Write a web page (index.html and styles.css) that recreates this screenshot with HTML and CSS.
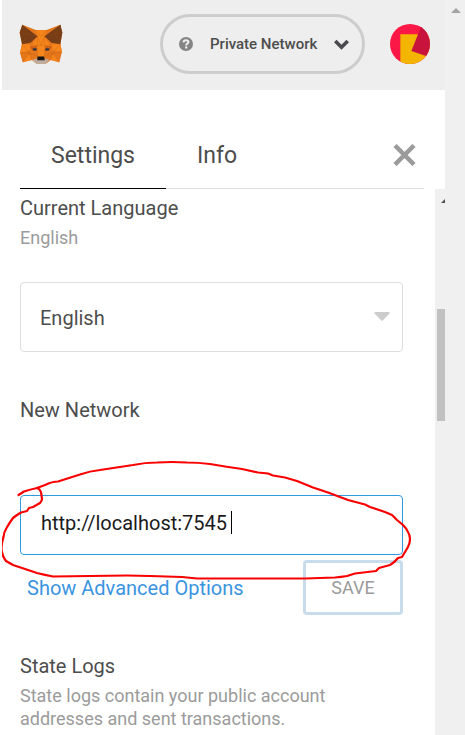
FILE: index.html
```html
<!DOCTYPE html>
<html lang="en">
<head>
<meta charset="utf-8">
<title>Settings</title>
<link rel="stylesheet" href="styles.css">
</head>
<body>
<div class="app">
  <header class="header">
    <svg class="fox" viewBox="56 70 131 124" aria-hidden="true">
      <path fill="#e4761b" d="M65 72 106 88H138L180 72 186 96 180 130 185 155 177 186 151 179 136 190H108L94 179 66 186 58 158 64 130 57 96Z"/>
      <path fill="#f6851b" d="M106 88H138L132 108 149 134 134 150 131 168H112L109 150 94 134 111 108ZM64 130 90 133 87 150 58 158ZM180 130 153 133 156 150 185 155ZM66 186 85 160 94 179ZM177 186 158 160 151 179Z"/>
      <path fill="#763d16" d="M65 72 111 107 90 127 64 131 57 96ZM180 72 132 107 153 127 180 131 186 96Z"/>
      <path fill="#cd6116" d="M87 138 108 136 111 151 96 150ZM156 138 135 136 132 151 147 150Z"/>
      <path fill="#c0ad9e" d="M95 178 111 174H131L147 178 134 191H109Z"/>
      <path fill="#161616" d="M111 168H131L133 180H110Z"/>
      <path fill="#233447" d="M96 144 107 143 109 150H98ZM147 144 136 143 134 150H145Z"/>
      <path fill="none" stroke="#a9530f" stroke-width="1" opacity=".7" d="M106 88 122 108 138 88M111 107 122 135 132 107M94 134 122 135 149 134M64 130 87 158 112 168M180 130 156 158 131 168M58 158H87L66 186M185 155 156 158 177 186M87 158 94 179M156 158 150 179M111 107 109 150 112 168M132 107 134 150 131 168M65 72 80 100 64 131M80 100 111 107M180 72 164 100 180 131M164 100 132 107M57 96 80 100M186 96 164 100"/>
    </svg>
    <button class="network" type="button">
      <svg class="help" viewBox="0 0 14 14" aria-hidden="true">
        <circle cx="7" cy="7" r="7" fill="#848484"/>
        <path d="M4.500 5.400C4.600 3.800 5.700 3.200 7 3.200c1.400 0 2.400.7 2.400 1.900C9.400 6.600 7.200 6.500 7.200 8.500" fill="none" stroke="#eee" stroke-width="2.100"/>
        <path d="M6.100 9.400H8.300V11.500H6.100Z" fill="#eee"/>
      </svg>
      <span>Private Network</span>
      <svg class="chevron" viewBox="0 0 14 10" aria-hidden="true"><path d="M1.200 1.800 7 7.500 12.800 1.800" fill="none" stroke="#4a4a4f" stroke-width="3.400"/></svg>
    </button>
    <button class="account" type="button" aria-label="Account">
      <svg viewBox="0 0 120 120" aria-hidden="true">
        <path fill="#fb1846" d="M0 0H120V120H0Z"/>
        <path fill="#f3b500" d="M31 31H125V125H31Z"/>
        <path fill="#fb1846" d="M82 0H120V31H82Z"/>
        <path fill="#c8143c" d="M93 8 130 22 115 98 64 81Z"/>
      </svg>
    </button>
  </header>
  <nav class="tabs">
    <a class="tab tab-active" href="#settings">Settings</a>
    <a class="tab" href="#info">Info</a>
    <button class="close" type="button" aria-label="Close">
      <svg viewBox="0 0 22 22" aria-hidden="true"><path d="M1.500 1.500 20.500 20.500M20.500 1.500 1.500 20.500" stroke="#9b9b9b" stroke-width="4.500"/></svg>
    </button>
  </nav>
  <div class="body">
    <main class="content" id="settings">
      <section class="language">
        <label class="title" for="language">Current Language</label>
        <p class="note">English</p>
        <div class="select-box">
          <select id="language"><option>English</option></select>
          <svg class="arrow" viewBox="0 0 16 9" aria-hidden="true"><path d="M1 0H15Q16 0 15.500 1.500L8.700 8.500Q8 9 7.300 8.500L.5 1.500Q0 0 1 0Z" fill="#cdcdcd"/></svg>
        </div>
      </section>
      <section class="rpc">
        <label class="title" for="rpc">New Network</label>
        <div class="field">
          <input id="rpc" type="text" value="http://localhost:7545">
          <span class="caret"></span>
          <svg class="scribble" viewBox="0 455 420 130" aria-hidden="true">
            <path d="M18.500 495 24 491.500Q30 489.500 37 488L45 485Q52 481.500 58 481.500L80 474.500Q90 471 100 470L133 465Q145 462.500 157 462.500 172 461.500 187 462.500 198 462.500 210 464L225 466.500 242 469 258 472.500 268 473.500 273 475.500 285 477.500 297 481 313 487.500 328 492.500 348 500 365 504.500 370 507 385 512 392 515 397 520 403 525Q407 529 408 532 410 535 410 539 410 543 408 547L402 557 398 558Q395 562 390 565L379 568 376 571 355 573.500 347 576Q341 577 335 577.500L305 578.500 225 578.500 197 578.500 182 577 150 576Q138 575.500 127 575.500L53 576.500Q45 575 37 573L22 568 13 565 6 561Q3 557 2.500 554 1 550 1.700 546 2 541 3.500 537 4 532 6.500 528 10 522 13 518L17 515 21 512.500 27 511 29 508 33 507 40 503Q42 501 42 499L41 492Q40 489 37 488" fill="none" stroke="#fb0000" stroke-width="2.200" stroke-linejoin="round" stroke-linecap="round"/>
          </svg>
        </div>
        <div class="actions">
          <a href="#advanced">Show Advanced Options</a>
          <button class="save" type="button">SAVE</button>
        </div>
      </section>
      <section class="logs">
        <h2 class="title">State Logs</h2>
        <p class="note">State logs contain your public account addresses and sent transactions.</p>
      </section>
    </main>
    <div class="inner-bar">
      <svg class="corner" viewBox="0 0 4 4" aria-hidden="true"><path d="M4 0V4H0Z" fill="#505050"/></svg>
      <div class="thumb"></div>
    </div>
  </div>
</div>
<div class="page-bar"><svg viewBox="0 0 10 5" aria-hidden="true"><path d="M5 0 10 5H0Z" fill="#a3a3a3"/></svg></div>
</body>
</html>
```
FILE: styles.css
```css
* { box-sizing: border-box; }
body {
  margin: 0;
  height: 100vh;
  overflow: hidden;
  display: flex;
  background: #fff;
  color: #4d4d4d;
  font: 20px/24px Roboto, sans-serif;
}
button, input, select { font: inherit; color: inherit; margin: 0; }
button { padding: 0; border: 0; background: none; }
a { color: inherit; text-decoration: none; }
svg { display: block; }
h2, p { margin: 0; }
.app { flex: 1; min-width: 0; margin-left: 2px; display: flex; flex-direction: column; }
.page-bar { width: 20px; background: #f0f0f0; padding: 8px 0 0 6px; }
.page-bar svg { width: 10px; height: 5px; }

.header {
  flex: none;
  height: 90px;
  padding: 0 15px 2px 17px;
  display: flex;
  align-items: center;
  background: #eee;
}
.fox { width: 44px; height: 41px; }
.network {
  height: 60px;
  width: 205px;
  margin-left: auto;
  padding: 0 13px 0 16px;
  border: 3px solid #cdcdcd;
  border-radius: 30px;
  display: flex;
  align-items: center;
  font-size: 15px;
  font-weight: 500;
}
.help { width: 14px; height: 14px; margin-right: 17px; }
.chevron { width: 15px; height: 11px; margin-left: auto; }
.account { width: 40px; height: 40px; margin-left: 25px; border-radius: 50%; overflow: hidden; }

.tabs {
  flex: none;
  height: 99px;
  margin: 0 21px 0 18px;
  padding-top: 34px;
  display: flex;
  align-items: stretch;
  border-bottom: 1px solid #dedede;
  font-size: 23px;
  line-height: 64px;
}
.tab { padding: 0 31px; margin-bottom: -1px; }
.tab-active { border-bottom: 1px solid #000; }
.close { margin: 0 8px 0 auto; align-self: flex-start; padding-top: 20px; }
.close svg { width: 23px; height: 22px; }

.body { flex: 1; min-height: 0; display: flex; }
.content { flex: 1; min-width: 0; padding: 7px 32px 0 18px; overflow: hidden; }
.title { display: block; font-size: 20px; font-weight: 400; line-height: 24px; }
.note { padding-top: 6px; font-size: 18px; line-height: 23px; color: #9b9b9b; }
.select-box { position: relative; margin-top: 33px; }
select {
  display: block;
  width: 100%;
  height: 70px;
  padding: 2px 19px 0;
  border: 1px solid #dedede;
  border-radius: 4px;
  background: #fff;
  appearance: none;
}
.arrow { position: absolute; right: 13px; top: 30px; width: 16px; height: 9px; pointer-events: none; }
.rpc { margin-top: 46px; }
.field { position: relative; margin-top: 73px; }
input {
  display: block;
  width: 100%;
  height: 60px;
  padding: 0 20px 4px;
  border: 1px solid #2f9ae0;
  border-radius: 4px;
  color: #1b1b1b;
  outline: 0;
}
.caret { position: absolute; left: 211px; top: 16px; width: 1px; height: 23px; background: #000; }
.scribble { position: absolute; left: -20px; top: -40px; width: 420px; height: 130px; pointer-events: none; }
.actions { display: flex; justify-content: space-between; align-items: center; margin-top: 5px; padding-left: 7px; color: #3b94df; }
.save {
  width: 100px;
  height: 55px;
  border: 3px solid #c8dceb;
  border-radius: 4px;
  font-size: 18px;
  color: #9b9b9b;
}
.logs { margin-top: 39px; }
.inner-bar { width: 10px; background: #f0f0f0; padding: 10px 0 0 2px; }
.corner { width: 4px; height: 4px; margin-left: 4px; }
.thumb { margin-top: 106px; height: 112px; background: #c1c1c1; }
```
